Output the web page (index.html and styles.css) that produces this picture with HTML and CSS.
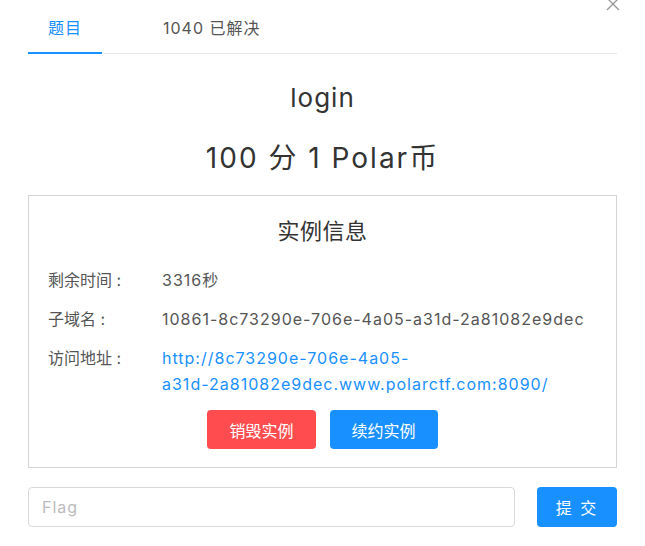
FILE: index.html
```html
<!DOCTYPE html>
<html lang="zh-CN">
<head>
    <meta charset="UTF-8">
    <meta name="viewport" content="width=device-width, initial-scale=1.0">
    <title>login</title>
    <link rel="stylesheet" href="styles.css">
</head>
<body>
    <div class="dialog">
        <!-- 关闭按钮 -->
        <button class="close" type="button" aria-label="关闭">
            <svg width="16" height="16" viewBox="0 0 16 16">
                <path d="M2 2 L14 14 M14 2 L2 14" stroke="#999" stroke-width="1.4" fill="none"/>
            </svg>
        </button>

        <!-- 标签页 -->
        <div class="tabs">
            <div class="tab active">题目</div>
            <div class="tab">1040 已解决</div>
        </div>

        <h1 class="title">login</h1>
        <h2 class="score">100 分 1 Polar币</h2>

        <!-- 实例信息 -->
        <div class="instance">
            <h3 class="instance-title">实例信息</h3>
            <div class="info-row">
                <span class="info-label">剩余时间 :</span>
                <span class="info-value">3316秒</span>
            </div>
            <div class="info-row">
                <span class="info-label">子域名 :</span>
                <span class="info-value">10861-8c73290e-706e-4a05-a31d-2a81082e9dec</span>
            </div>
            <div class="info-row">
                <span class="info-label">访问地址 :</span>
                <a class="info-value link" href="#">http://8c73290e-706e-4a05-<span class="nowrap">a31d-2a81082e9dec.www.polarctf.com:8090/</span></a>
            </div>
            <div class="actions">
                <button class="btn btn-danger" type="button">销毁实例</button>
                <button class="btn btn-primary" type="button">续约实例</button>
            </div>
        </div>

        <!-- 提交 flag -->
        <form class="flag-form" onsubmit="event.preventDefault();">
            <input class="flag-input" type="text" placeholder="Flag">
            <button class="btn btn-primary btn-submit" type="submit">提 交</button>
        </form>
    </div>
</body>
</html>
```

FILE: styles.css
```css
body {
    margin: 0;
    font-family: Inter, "Noto Sans CJK SC", sans-serif;
    letter-spacing: 1px;
    color: #333;
    background: #fff;
    -webkit-font-smoothing: antialiased;
}
.dialog {
    position: relative;
    padding: 0 28px;
}
.close {
    position: absolute;
    top: -4px;
    right: 24px;
    padding: 0;
    border: 0;
    background: none;
    cursor: pointer;
    line-height: 0;
}

/* 标签页 */
.tabs {
    display: flex;
    border-bottom: 1px solid #e8e8e8;
}
.tab {
    position: relative;
    height: 53px;
    line-height: 56px;
    padding: 0 20px;
    font-size: 16px;
    color: #555;
}
.tab + .tab { margin-left: 41px; }
.tab.active { color: #1890ff; }
.tab.active::after {
    content: "";
    position: absolute;
    left: 0;
    right: 0;
    bottom: -1px;
    height: 2px;
    background: #1890ff;
}

.title {
    margin: 26px 0 0;
    font-size: 26px;
    font-weight: 400;
    line-height: 36px;
    text-align: center;
}
.score {
    margin: 22px 0 17px;
    font-size: 28px;
    font-weight: 400;
    line-height: 40px;
    letter-spacing: 2px;
    text-align: center;
}

/* 实例信息 */
.instance {
    border: 1px solid #d4d4d4;
    padding: 20px 19px 18px;
}
.instance-title {
    margin: 0 0 21px;
    font-size: 22px;
    font-weight: 400;
    line-height: 30px;
    letter-spacing: 0.5px;
    text-align: center;
}
.info-row {
    display: flex;
    font-size: 16px;
    line-height: 26px;
    color: #555;
    margin-bottom: 13px;
}
.info-row:last-of-type { margin-bottom: 14px; }
.info-label {
    flex: 0 0 114px;
    letter-spacing: 0;
}
.info-value {
    flex: 1;
    min-width: 0;
}
.link {
    color: #1890ff;
    text-decoration: none;
}
.nowrap { white-space: nowrap; }
.actions {
    display: flex;
    justify-content: center;
    gap: 14px;
}

.btn {
    height: 39px;
    padding: 0 22px;
    border: 0;
    border-radius: 4px;
    font-family: inherit;
    font-size: 16px;
    letter-spacing: 0;
    color: #fff;
    cursor: pointer;
}
.btn-danger { background: #ff4d4f; }
.btn-primary { background: #1890ff; }

/* 提交 */
.flag-form {
    display: flex;
    gap: 22px;
    margin-top: 19px;
}
.flag-input {
    flex: 1;
    height: 40px;
    box-sizing: border-box;
    padding: 0 13px;
    border: 1px solid #d9d9d9;
    border-radius: 4px;
    font-family: inherit;
    font-size: 16px;
    letter-spacing: 1px;
    color: #333;
    outline: 0;
}
.flag-input::placeholder { color: #bbb; }
.btn-submit {
    width: 80px;
    height: 40px;
    padding: 0;
    letter-spacing: 2px;
}
```
